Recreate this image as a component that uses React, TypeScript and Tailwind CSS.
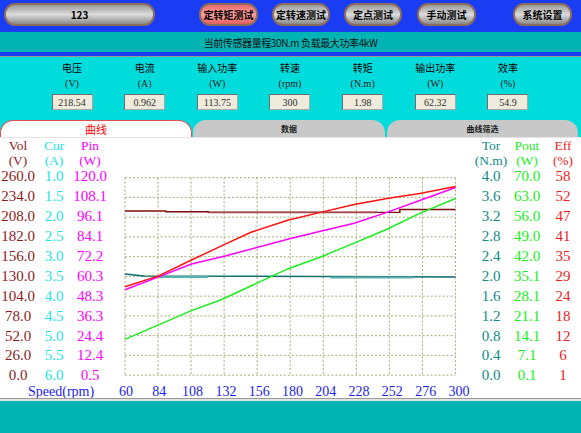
import React from "react";

const cjk = { fontFamily: '"Noto Sans CJK SC", "Noto Sans", sans-serif' };
const serif = { fontFamily: '"Liberation Serif", "Noto Sans CJK SC", serif' };

const readings = [
  { label: "电压", unit: "(V)", value: "218.54" },
  { label: "电流", unit: "(A)", value: "0.962" },
  { label: "输入功率", unit: "(W)", value: "113.75" },
  { label: "转速", unit: "(rpm)", value: "300" },
  { label: "转矩", unit: "(N.m)", value: "1.98" },
  { label: "输出功率", unit: "(W)", value: "62.32" },
  { label: "效率", unit: "(%)", value: "54.9" },
];

const leftAxes = [
  {
    name: "Vol",
    unit: "(V)",
    color: "text-[#8b1c1c]",
    values: ["260.0", "234.0", "208.0", "182.0", "156.0", "130.0", "104.0", "78.0", "52.0", "26.0", "0.0"],
  },
  {
    name: "Cur",
    unit: "(A)",
    color: "text-[#22e4e4]",
    values: ["1.0", "1.5", "2.0", "2.5", "3.0", "3.5", "4.0", "4.5", "5.0", "5.5", "6.0"],
  },
  {
    name: "Pin",
    unit: "(W)",
    color: "text-[#ff00ff]",
    values: ["120.0", "108.1", "96.1", "84.1", "72.2", "60.3", "48.3", "36.3", "24.4", "12.4", "0.5"],
  },
];

const rightAxes = [
  {
    name: "Tor",
    unit: "(N.m)",
    color: "text-[#108a8a]",
    values: ["4.0", "3.6", "3.2", "2.8", "2.4", "2.0", "1.6", "1.2", "0.8", "0.4", "0.0"],
  },
  {
    name: "Pout",
    unit: "(W)",
    color: "text-[#18ee18]",
    values: ["70.0", "63.0", "56.0", "49.0", "42.0", "35.1", "28.1", "21.1", "14.1", "7.1", "0.1"],
  },
  {
    name: "Eff",
    unit: "(%)",
    color: "text-[#f01c1c]",
    values: ["58", "52", "47", "41", "35", "29", "24", "18", "12", "6", "1"],
  },
];

const speeds = ["60", "84", "108", "132", "156", "180", "204", "228", "252", "276", "300"];

function PillButton({ label, red, className }: { label: string; red?: boolean; className: string }) {
  return (
    <div
      className={`${className} h-[23px] rounded-[11px] border-2 border-[#8e6c5c] flex items-center justify-center text-[10px] font-bold text-black ${
        red
          ? "bg-linear-to-b from-[#e86a6a] via-[#ffa0a0] to-[#e05c5c]"
          : "bg-linear-to-b from-[#9a9a9a] via-[#dcdcdc] to-[#8a8a8a]"
      }`}
      style={cjk}
    >
      {label}
    </div>
  );
}

function AxisColumn({ axis }: { axis: (typeof leftAxes)[number] }) {
  return (
    <div className={`w-[36px] flex flex-col items-center ${axis.color}`} style={serif}>
      <div className="h-[29px] pt-[1px] flex flex-col items-center text-[13.5px] leading-[14.5px]">
        <div className="h-[14.5px]">{axis.name}</div>
        <div className="h-[14.5px]">{axis.unit}</div>
      </div>
      {axis.values.map((v, i) => (
        <div key={i} className="h-[19.9px] flex items-center text-[15px] leading-[15px]">
          {v}
        </div>
      ))}
    </div>
  );
}

function Plot() {
  const x0 = 6;
  const y0 = 39;
  const w = 333;
  const h = 199;
  const vLines = Array.from({ length: 11 }, (_, i) => x0 + (w / 10) * i);
  const hLines = Array.from({ length: 11 }, (_, i) => y0 + (h / 10) * i);

  return (
    <svg width="345" height="248" viewBox="0 0 345 248" className="block">
      {vLines.map((x, i) => (
        <line key={"v" + i} x1={x} y1={y0} x2={x} y2={y0 + h} stroke="#a9a774" strokeDasharray="2 2" />
      ))}
      {hLines.map((y, i) => (
        <line key={"h" + i} x1={x0} y1={y} x2={x0 + w} y2={y} stroke="#a9a774" strokeDasharray="2 2" />
      ))}
      {/* voltage */}
      <polyline
        points="6,72.5 47,72.5 47,73.3 90,73.3 90,74 283,74 283,71 339,71"
        fill="none"
        stroke="#7a0c0c"
        strokeWidth="1.5"
      />
      <polyline points="6,72.5 47,72.5" fill="none" stroke="#a24a4a" strokeWidth="2" />
      <polyline points="90,74 260,74" fill="none" stroke="#a24a4a" strokeWidth="2" />
      {/* torque */}
      <polyline points="6,136 25,138 339,139" fill="none" stroke="#0c7070" strokeWidth="1.5" />
      <polyline points="40,139 90,139" fill="none" stroke="#5aaeae" strokeWidth="2" />
      <polyline points="213,139.5 297,139.5" fill="none" stroke="#5aaeae" strokeWidth="2" />
      {/* output power */}
      <polyline
        points="6,202 73,173 103,162 170,131 203,119 237,105 270,91 303,75 339,60"
        fill="none"
        stroke="#18ee18"
        strokeWidth="1.5"
      />
      {/* input power */}
      <polyline
        points="6,152 40,139 73,126 107,118 170,101 203,93 237,85 270,74 303,62 339,49"
        fill="none"
        stroke="#ff00ff"
        strokeWidth="1.5"
      />
      {/* efficiency */}
      <polyline
        points="6,149 40,138 73,122 107,106 133,94 170,82 203,74 237,66 270,60 303,55 339,48"
        fill="none"
        stroke="#ff1010"
        strokeWidth="1.5"
      />
    </svg>
  );
}

export default function App() {
  return (
    <div className="w-[581px] h-[433px] overflow-hidden flex flex-col bg-[#00b4b4]">
      {/* top buttons */}
      <div className="h-[32px] bg-[#1a3cf2] flex pt-[3px] pl-[4px]">
        <PillButton label="123" className="w-[151px]" />
        <PillButton label="定转矩测试" red className="ml-[44px] w-[59px]" />
        <PillButton label="定转速测试" className="ml-[14px] w-[58px]" />
        <PillButton label="定点测试" className="ml-[14px] w-[58px]" />
        <PillButton label="手动测试" className="ml-[15px] w-[59px]" />
        <PillButton label="系统设置" className="ml-[37px] w-[59px]" />
      </div>

      {/* sensor info strip */}
      <div
        className="h-[20px] bg-[#00b4b4] flex items-center justify-center text-[10px] tracking-[-0.4px] text-[#101010]"
        style={cjk}
      >
        当前传感器量程30N.m 负载最大功率4kW
      </div>
      <div className="h-[4px] bg-[#1a3cf2]" />
      <div className="h-px bg-[#9c948c]" />

      {/* readings panel + tabs */}
      <div className="bg-[#00dcdc] flex flex-col">
        <div className="flex pl-[35.7px] pt-[4px]">
          {readings.map((r) => (
            <div key={r.label} className="w-[72.67px] flex flex-col items-center">
              <div className="h-[14px] leading-[14px] text-[10px] text-black" style={cjk}>
                {r.label}
              </div>
              <div className="mt-[2px] h-[14px] leading-[14px] text-[10px] text-[#202020]" style={serif}>
                {r.unit}
              </div>
              <div
                className="mt-[3px] w-[41px] h-[16px] bg-[#eeebdc] border border-[#a8a8a8] border-t-[#6e6e6e] border-l-[#6e6e6e] flex items-center justify-center text-[10px] text-[#303030]"
                style={serif}
              >
                {r.value}
              </div>
            </div>
          ))}
        </div>

        <div className="mt-[10px] h-[17px] flex items-end">
          <div
            className="w-[192px] h-[17px] bg-white border border-b-0 border-[#e05050] rounded-t-[13px] flex items-center justify-center text-[11px] text-[#ff0000]"
            style={cjk}
          >
            曲线
          </div>
          <div
            className="ml-[1px] w-[192px] h-[17px] bg-[#c8c8c8] rounded-t-[13px] flex items-center justify-center text-[8px] font-bold text-[#202020]"
            style={cjk}
          >
            数据
          </div>
          <div
            className="ml-[2px] w-[191px] h-[17px] bg-[#c8c8c8] rounded-t-[13px] flex items-center justify-center text-[8px] font-bold text-[#202020]"
            style={cjk}
          >
            曲线筛选
          </div>
        </div>
      </div>
      <div className="h-px bg-[#e4e4e4]" />

      {/* chart */}
      <div className="h-[260px] bg-white flex flex-col">
        <div className="h-[248px] flex">
          <div className="w-[120px] flex">
            {leftAxes.map((a) => (
              <AxisColumn key={a.name} axis={a} />
            ))}
          </div>
          <Plot />
          <div className="flex-1 flex pl-[11.5px]">
            {rightAxes.map((a) => (
              <AxisColumn key={a.name} axis={a} />
            ))}
          </div>
        </div>
        <div className="h-[12px] flex text-[14px] leading-[12px] text-[#1c1cf0]" style={serif}>
          <div className="w-[109.35px] pl-[28px]">Speed(rpm)</div>
          {speeds.map((s) => (
            <div key={s} className="w-[33.3px] text-center">
              {s}
            </div>
          ))}
        </div>
      </div>
      <div className="h-px bg-[#9a9a9a]" />
      <div className="h-[2px] bg-[#e2e2e2]" />
      <div className="flex-1 bg-[#00b4b4]" />
    </div>
  );
}
